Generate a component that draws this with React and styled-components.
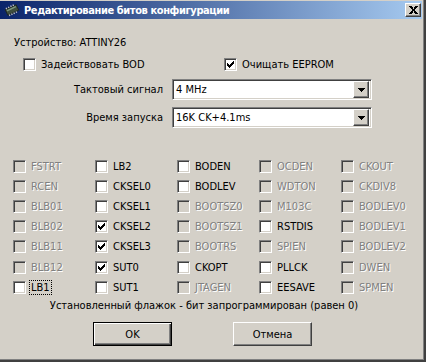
import React from 'react';
import styled, { createGlobalStyle, css } from 'styled-components';

const GlobalStyle = createGlobalStyle`
  html, body {
    margin: 0;
    padding: 0;
    background: #d4d0c8;
  }
  * {
    box-sizing: border-box;
  }
`;

const Window = styled.div`
  width: 426px;
  height: 362px;
  background: #d4d0c8;
  border-right: 2px solid #404040;
  border-bottom: 2px solid #404040;
  box-shadow: inset -1px -1px 0 #808080;
  font-family: 'DejaVu Sans Condensed', 'DejaVu Sans', sans-serif;
  font-size: 11px;
  color: #000;
  display: flex;
  flex-direction: column;
  overflow: hidden;
`;

const TitleBar = styled.div`
  height: 18px;
  margin-top: 1px;
  margin-right: 2px;
  display: flex;
  align-items: center;
  padding-left: 4px;
  padding-right: 1px;
  background: linear-gradient(to right, #0a246a, #a6caf0);
`;

const TitleText = styled.div`
  flex: 1;
  margin-left: 4px;
  color: #fff;
  font-weight: bold;
  font-size: 11px;
  letter-spacing: -0.4px;
  white-space: nowrap;
`;

const raised = css`
  background: #d4d0c8;
  border: 1px solid;
  border-color: #fff #404040 #404040 #fff;
  box-shadow: inset -1px -1px 0 #808080, inset 1px 1px 0 #d4d0c8;
`;

const CloseButton = styled.div`
  ${raised};
  width: 16px;
  height: 14px;
  display: flex;
  align-items: center;
  justify-content: center;
`;

const Body = styled.div`
  flex: 1;
  display: flex;
  flex-direction: column;
  padding: 0 0 0 13px;
`;

const DeviceLabel = styled.div`
  margin-top: 17px;
  margin-left: 1px;
  line-height: 13px;
`;

const OptionsRow = styled.div`
  display: flex;
  margin-top: 9px;
  padding-left: 10px;
  height: 13px;
`;

const OptionSlot = styled.div`
  width: ${(p) => p.width}px;
`;

const FormGrid = styled.div`
  display: grid;
  grid-template-columns: 150px 200px;
  column-gap: 9px;
  row-gap: 7px;
  margin-top: 8px;
  align-items: center;
`;

const FieldLabel = styled.div`
  text-align: right;
`;

const Combo = styled.div`
  height: 21px;
  background: #fff;
  border: 1px solid;
  border-color: #808080 #fff #fff #808080;
  box-shadow: inset 1px 1px 0 #404040, inset -1px -1px 0 #d4d0c8;
  display: flex;
  align-items: center;
  padding: 2px;
`;

const ComboValue = styled.div`
  flex: 1;
  padding-left: 1px;
`;

const ComboButton = styled.div`
  ${raised};
  width: 16px;
  height: 17px;
  display: flex;
  align-items: center;
  justify-content: center;
`;

const FuseGrid = styled.div`
  display: grid;
  grid-template-columns: repeat(5, 82px);
  grid-template-rows: repeat(7, 20.2px);
  grid-auto-flow: column;
  margin-top: 28px;
`;

const CheckLabel = styled.label`
  display: flex;
  align-items: center;
  gap: 5px;
  white-space: nowrap;
  color: ${(p) => (p.disabled ? '#808080' : '#000')};
  text-shadow: ${(p) => (p.disabled ? '1px 1px 0 #fff' : 'none')};
`;

const Box = styled.span`
  width: 13px;
  height: 13px;
  flex: none;
  border: 1px solid;
  border-color: #808080 #fff #fff #808080;
  box-shadow: inset 1px 1px 0 #404040, inset -1px -1px 0 #d4d0c8;
  background: ${(p) => (p.disabled ? '#d4d0c8' : '#fff')};
  display: flex;
  align-items: center;
  justify-content: center;
`;

const LabelText = styled.span`
  line-height: 13px;
  padding: 0 1px;
  margin-left: -1px;
  outline: ${(p) => (p.focused ? '1px dotted #000' : 'none')};
  outline-offset: 0;
`;

const Note = styled.div`
  align-self: flex-start;
  width: 382px;
  text-align: center;
  margin-top: 2px;
  line-height: 13px;
`;

const ButtonRow = styled.div`
  display: flex;
  gap: 61px;
  margin-top: 10px;
  padding-left: 80px;
`;

const Button = styled.div`
  width: 79px;
  height: 24px;
  display: flex;
  align-items: center;
  justify-content: center;
  background: #d4d0c8;
  ${(p) =>
    p.primary
      ? css`
          border: 1px solid #000;
          box-shadow: inset 1px 1px 0 #fff, inset -1px -1px 0 #404040,
            inset -2px -2px 0 #808080;
        `
      : css`
          border: 1px solid;
          border-color: #fff #404040 #404040 #fff;
          box-shadow: inset -1px -1px 0 #808080;
        `}
`;

const checkPixels = [
  [6, 0],
  [5, 1], [6, 1],
  [0, 2], [4, 2], [5, 2], [6, 2],
  [0, 3], [1, 3], [3, 3], [4, 3], [5, 3],
  [0, 4], [1, 4], [2, 4], [3, 4], [4, 4],
  [1, 5], [2, 5], [3, 5],
  [2, 6],
];

function CheckMark({ color = '#000' }) {
  return (
    <svg width="7" height="7" viewBox="0 0 7 7" shapeRendering="crispEdges">
      {checkPixels.map(([x, y]) => (
        <rect key={`${x}-${y}`} x={x} y={y} width="1" height="1" fill={color} />
      ))}
    </svg>
  );
}

function Checkbox({ label, checked, disabled, focused }) {
  return (
    <CheckLabel disabled={disabled}>
      <Box disabled={disabled}>{checked && <CheckMark color={disabled ? '#808080' : '#000'} />}</Box>
      <LabelText focused={focused}>{label}</LabelText>
    </CheckLabel>
  );
}

function Arrow() {
  return (
    <svg width="7" height="4" viewBox="0 0 7 4" shapeRendering="crispEdges">
      <rect x="0" y="0" width="7" height="1" fill="#000" />
      <rect x="1" y="1" width="5" height="1" fill="#000" />
      <rect x="2" y="2" width="3" height="1" fill="#000" />
      <rect x="3" y="3" width="1" height="1" fill="#000" />
    </svg>
  );
}

function CloseGlyph() {
  return (
    <svg width="9" height="8" viewBox="0 0 9 8" shapeRendering="crispEdges">
      <path d="M0 0h2.5L4.5 2.6 6.5 0H9L5.8 4 9 8H6.5L4.5 5.4 2.5 8H0l3.2-4z" fill="#000" />
    </svg>
  );
}

function ChipIcon() {
  return (
    <svg width="16" height="14" viewBox="0 0 16 14">
      <g transform="rotate(-25 8 7)">
        <rect x="2" y="4" width="12" height="6" fill="#3f4f3f" stroke="#1c241c" strokeWidth="0.8" />
        {[3, 5.5, 8, 10.5].map((x) => (
          <g key={x}>
            <rect x={x} y="2.4" width="1.2" height="1.6" fill="#c8c8c8" />
            <rect x={x} y="10" width="1.2" height="1.6" fill="#c8c8c8" />
          </g>
        ))}
        <rect x="3" y="5" width="10" height="1.2" fill="#7f9a7f" />
      </g>
    </svg>
  );
}

const fuses = [
  [
    { n: 'FSTRT', d: true },
    { n: 'RCEN', d: true },
    { n: 'BLB01', d: true },
    { n: 'BLB02', d: true },
    { n: 'BLB11', d: true },
    { n: 'BLB12', d: true },
    { n: 'LB1', f: true },
  ],
  [
    { n: 'LB2' },
    { n: 'CKSEL0' },
    { n: 'CKSEL1' },
    { n: 'CKSEL2', c: true },
    { n: 'CKSEL3', c: true },
    { n: 'SUT0', c: true },
    { n: 'SUT1' },
  ],
  [
    { n: 'BODEN' },
    { n: 'BODLEV' },
    { n: 'BOOTSZ0', d: true },
    { n: 'BOOTSZ1', d: true },
    { n: 'BOOTRS', d: true },
    { n: 'CKOPT' },
    { n: 'JTAGEN', d: true },
  ],
  [
    { n: 'OCDEN', d: true },
    { n: 'WDTON', d: true },
    { n: 'M103C', d: true },
    { n: 'RSTDIS' },
    { n: 'SPIEN', d: true },
    { n: 'PLLCK' },
    { n: 'EESAVE' },
  ],
  [
    { n: 'CKOUT', d: true },
    { n: 'CKDIV8', d: true },
    { n: 'BODLEV0', d: true },
    { n: 'BODLEV1', d: true },
    { n: 'BODLEV2', d: true },
    { n: 'DWEN', d: true },
    { n: 'SPMEN', d: true },
  ],
];

export default function App() {
  return (
    <>
      <GlobalStyle />
      <Window>
        <TitleBar>
          <ChipIcon />
          <TitleText>Редактирование битов конфигурации</TitleText>
          <CloseButton>
            <CloseGlyph />
          </CloseButton>
        </TitleBar>
        <Body>
          <DeviceLabel>Устройство: ATTINY26</DeviceLabel>
          <OptionsRow>
            <OptionSlot width={201}>
              <Checkbox label="Задействовать BOD" />
            </OptionSlot>
            <OptionSlot width={180}>
              <Checkbox label="Очищать EEPROM" checked />
            </OptionSlot>
          </OptionsRow>
          <FormGrid>
            <FieldLabel>Тактовый сигнал</FieldLabel>
            <Combo>
              <ComboValue>4 MHz</ComboValue>
              <ComboButton>
                <Arrow />
              </ComboButton>
            </Combo>
            <FieldLabel>Время запуска</FieldLabel>
            <Combo>
              <ComboValue>16K CK+4.1ms</ComboValue>
              <ComboButton>
                <Arrow />
              </ComboButton>
            </Combo>
          </FormGrid>
          <FuseGrid>
            {fuses.flat().map((f) => (
              <Checkbox key={f.n} label={f.n} checked={f.c} disabled={f.d} focused={f.f} />
            ))}
          </FuseGrid>
          <Note>Установленный флажок - бит запрограммирован (равен 0)</Note>
          <ButtonRow>
            <Button primary>OK</Button>
            <Button>Отмена</Button>
          </ButtonRow>
        </Body>
      </Window>
    </>
  );
}
